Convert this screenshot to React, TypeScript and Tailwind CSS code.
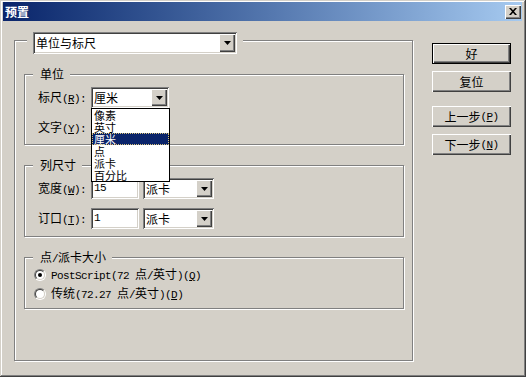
import React from 'react';

const mono = "font-['Liberation_Mono',monospace] text-[11px] tracking-[-0.6px]";
const sunken =
  'shadow-[inset_1px_1px_0_#808080,inset_-1px_-1px_0_#fff,inset_2px_2px_0_#404040,inset_-2px_-2px_0_#d4d0c8]';
const raised = 'shadow-[inset_1px_1px_0_#fff,inset_-1px_-1px_0_#404040,inset_-2px_-2px_0_#808080]';
const etched = 'border border-[#808080] shadow-[inset_1px_1px_0_#fff,1px_1px_0_#fff]';

function Arrow() {
  return (
    <svg width="7" height="4" viewBox="0 0 7 4">
      <path d="M0 0h7L3.5 4z" fill="#000" />
    </svg>
  );
}

function Key({ k }: { k: string }) {
  return (
    <span className={mono}>
      (<span className="underline">{k}</span>)
    </span>
  );
}

function Combo({ value, className }: { value: React.ReactNode; className: string }) {
  return (
    <div className={`flex bg-white p-[2px] ${sunken} ${className}`}>
      <div className="flex-1 flex items-center pl-[1px] text-[12px] leading-[12px]">{value}</div>
      <div className={`w-[16px] bg-[#d4d0c8] flex items-center justify-center ${raised}`}>
        <Arrow />
      </div>
    </div>
  );
}

function Field({ value, className }: { value: string; className: string }) {
  return (
    <div className={`flex items-center bg-white pl-[3px] ${sunken} ${className}`}>
      <span className={mono}>{value}</span>
    </div>
  );
}

function Group({
  label,
  className,
  children,
}: {
  label: React.ReactNode;
  className: string;
  children: React.ReactNode;
}) {
  return (
    <div className={`relative ${etched} ${className}`}>
      <div className="absolute top-[-7px] left-[8px] bg-[#d4d0c8] pl-[7px] pr-[6px] text-[12px] leading-[12px]">
        {label}
      </div>
      {children}
    </div>
  );
}

function Radio({ checked }: { checked?: boolean }) {
  return (
    <div className="w-[12px] h-[12px] rounded-full border border-t-[#808080] border-l-[#808080] border-b-white border-r-white">
      <div className="w-full h-full rounded-full border border-t-[#404040] border-l-[#404040] border-b-[#d4d0c8] border-r-[#d4d0c8] bg-white flex items-center justify-center">
        {checked && <div className="w-[4px] h-[4px] rounded-full bg-black" />}
      </div>
    </div>
  );
}

function Button({ children, isDefault }: { children: React.ReactNode; isDefault?: boolean }) {
  return (
    <div className={`w-[79px] h-[21px] ${isDefault ? 'border border-black' : ''} bg-[#d4d0c8]`}>
      <div className={`w-full h-full flex items-center justify-center text-[12px] leading-[12px] ${raised}`}>
        {children}
      </div>
    </div>
  );
}

export default function App() {
  const units = ['像素', '英寸', '厘米', '点', '派卡', '百分比'];

  return (
    <div className="w-[526px] h-[377px] bg-[#d4d0c8] pt-[2px] pl-[3px] pr-[4px] text-black font-['Noto_Sans_CJK_SC',sans-serif] shadow-[inset_-1px_-1px_0_#404040,inset_1px_1px_0_#d4d0c8,inset_-2px_-2px_0_#808080,inset_2px_2px_0_#fff] overflow-hidden">
      {/* Title bar */}
      <div className="h-[19px] flex items-center justify-between pl-[2px] pr-[1px] bg-gradient-to-r from-[#0a246a] to-[#a6caf0]">
        <span className="text-white font-bold text-[12px] leading-[12px]">预置</span>
        <div className={`w-[16px] h-[14px] bg-[#d4d0c8] flex items-center justify-center ${raised}`}>
          <svg width="8" height="7" viewBox="0 0 8 7">
            <path d="M0 0h2l2 2.2L6 0h2L5 3.5 8 7H6L4 4.8 2 7H0l3-3.5z" fill="#000" />
          </svg>
        </div>
      </div>

      <div className="flex">
        {/* Main frame */}
        <div className={`relative ml-[11px] mt-[19px] w-[399px] h-[321px] ${etched} pt-[33px] pl-[9px] flex flex-col gap-[20px]`}>
          <div className="absolute top-[-9px] left-[12px] bg-[#d4d0c8] px-[6px]">
            <Combo value="单位与标尺" className="w-[204px] h-[22px] text-[12px]" />
          </div>

          {/* 单位 */}
          <Group label="单位" className="w-[380px] h-[71px] pt-[12px] pl-[13px]">
            <div className="flex flex-col gap-[9px]">
              <div className="flex items-center">
                <span className="w-[53px] text-[12px] leading-[12px]">
                  标尺<Key k="R" />
                  <span className={mono}>:</span>
                </span>
                <Combo value="厘米" className="w-[78px] h-[21px]" />
              </div>
              <div className="flex items-center">
                <span className="w-[53px] text-[12px] leading-[12px]">
                  文字<Key k="Y" />
                  <span className={mono}>:</span>
                </span>
                <Combo value="" className="w-[78px] h-[21px]" />
              </div>
            </div>

            {/* Open dropdown list */}
            <div className="absolute left-[66px] top-[33px] w-[79px] bg-white border border-black z-10">
              {units.map((u) => (
                <div
                  key={u}
                  className={`h-[12px] pl-[2px] text-[11px] leading-[12px] ${
                    u === '厘米'
                      ? 'bg-[#0a246a] text-white outline outline-1 outline-dotted outline-[#d8c27a] -outline-offset-1'
                      : ''
                  }`}
                >
                  {u}
                </div>
              ))}
            </div>
          </Group>

          {/* 列尺寸 */}
          <Group label="列尺寸" className="w-[380px] h-[72px] pt-[12px] pl-[13px]">
            <div className="flex flex-col gap-[9px]">
              <div className="flex items-center">
                <span className="w-[53px] text-[12px] leading-[12px]">
                  宽度<Key k="W" />
                  <span className={mono}>:</span>
                </span>
                <Field value="15" className="w-[48px] h-[21px]" />
                <Combo value="派卡" className="ml-[4px] w-[71px] h-[21px]" />
              </div>
              <div className="flex items-center">
                <span className="w-[53px] text-[12px] leading-[12px]">
                  订口<Key k="T" />
                  <span className={mono}>:</span>
                </span>
                <Field value="1" className="w-[48px] h-[21px]" />
                <Combo value="派卡" className="ml-[4px] w-[71px] h-[21px]" />
              </div>
            </div>
          </Group>

          {/* 点/派卡大小 */}
          <Group
            label={
              <>
                点<span className={mono}>/</span>派卡大小
              </>
            }
            className="w-[380px] h-[52px] pt-[9px] pl-[9px]"
          >
            <div className="flex flex-col gap-[3px]">
              <div className="h-[16px] flex items-center">
                <Radio checked />
                <span className="ml-[5px] text-[12px] leading-[12px]">
                  <span className={mono}>PostScript(72 </span>点<span className={mono}>/</span>英寸
                  <span className={mono}>)</span>
                  <Key k="Q" />
                </span>
              </div>
              <div className="h-[16px] flex items-center">
                <Radio />
                <span className="ml-[5px] text-[12px] leading-[12px]">
                  传统<span className={mono}>(72.27 </span>点<span className={mono}>/</span>英寸
                  <span className={mono}>)</span>
                  <Key k="D" />
                </span>
              </div>
            </div>
          </Group>
        </div>

        {/* Buttons */}
        <div className="ml-[19px] mt-[22px] flex flex-col">
          <Button isDefault>好</Button>
          <div className="mt-[7px]">
            <Button>复位</Button>
          </div>
          <div className="mt-[14px]">
            <Button>
              上一步<Key k="P" />
            </Button>
          </div>
          <div className="mt-[7px]">
            <Button>
              下一步<Key k="N" />
            </Button>
          </div>
        </div>
      </div>
    </div>
  );
}
